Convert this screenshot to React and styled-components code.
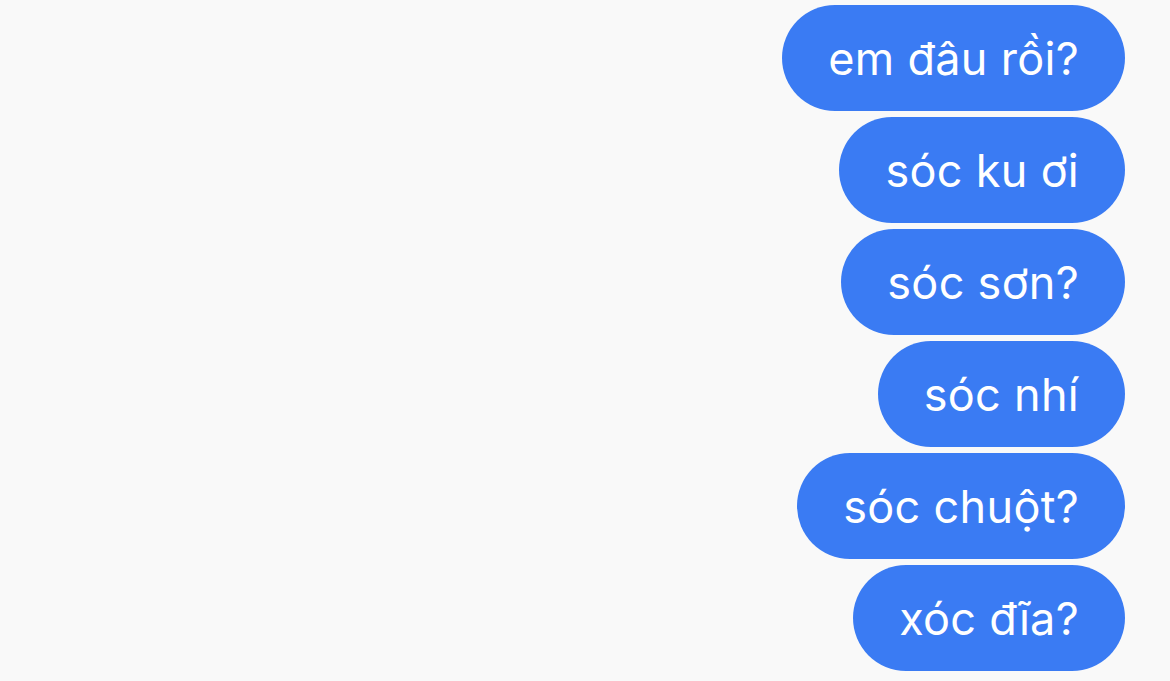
import styled, { createGlobalStyle } from 'styled-components'

const GlobalStyle = createGlobalStyle`
    html, body {
        margin: 0;
        padding: 0;
        background-color: #f9f9f9;
    }
`;

const ThreadDiv = styled.div`
    width: 1170px;
    height: 681px;
    box-sizing: border-box;
    padding: 5px 45px 0 0;
    display: flex;
    flex-direction: column;
    align-items: flex-end;
    gap: 6px;
    background-color: #f9f9f9;
    overflow: hidden;
`;

const BubbleSpan = styled.span`
    height: 106px;
    box-sizing: border-box;
    padding: 0 46px;
    display: flex;
    align-items: center;
    border-radius: 53px;
    background-color: #3a7bf3;
    color: #ffffff;
    font-family: Inter, "Noto Sans", sans-serif;
    font-size: 45px;
    letter-spacing: 0.3px;
    white-space: nowrap;
`;

const messages = [
    'em đâu rồi?',
    'sóc ku ơi',
    'sóc sơn?',
    'sóc nhí',
    'sóc chuột?',
    'xóc đĩa?',
];

function App() {
    return (
        <>
            <GlobalStyle />
            <ThreadDiv>
                {messages.map((text, i) => (
                    <BubbleSpan key={i}>{text}</BubbleSpan>
                ))}
            </ThreadDiv>
        </>
    );
}

export default App;
